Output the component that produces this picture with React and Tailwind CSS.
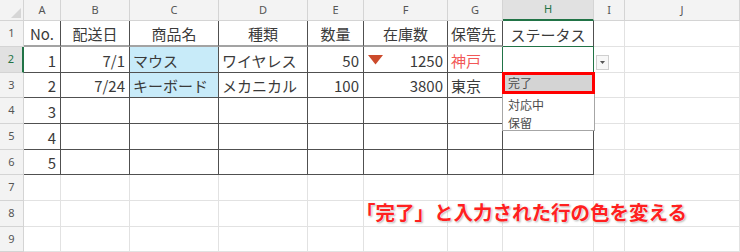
import React from "react";

const COLS = ["A", "B", "C", "D", "E", "F", "G", "H", "I", "J"];
const ROW_H = ["h-[26px]", "h-[26px]", "h-[25px]", "h-[26px]", "h-[26px]", "h-[25px]", "h-[26px]", "h-[26px]", "h-[25px]"];

const FONT = "font-['Noto_Sans_CJK_JP','Noto_Sans',sans-serif]";

function Tri() {
  return (
    <svg width="15" height="10" viewBox="0 0 15 10" className="shrink-0">
      <polygon points="0,0 15,0 7.5,9.5" fill="#cc4a2b" />
    </svg>
  );
}

// cell helpers
const GRID = "border-r border-b border-[#e2e2e2]";
const TBL = "border-r border-b border-[#505050]";
const TBL_HEAD = "border-r border-[#505050] border-b-2 border-b-[#a3a3a3]";

function cellClass(r, c) {
  // r: 1..9, c: 0..9 (A..J)
  if (r === 1 && c <= 7) {
    if (c === 7) return "border-r border-[#505050] border-b border-b-[#217346]";
    return TBL_HEAD;
  }
  if (r >= 2 && r <= 6 && c <= 7) {
    if (r === 2 && c === 6) return "border-b border-[#505050] border-r border-r-[#217346]";
    if (r === 2 && c === 7) return "border-r border-b border-[#217346]";
    return TBL;
  }
  return GRID;
}

const DATA = {
  1: [
    { t: "No.", a: "c" },
    { t: "配送日", a: "c" },
    { t: "商品名", a: "c" },
    { t: "種類", a: "c" },
    { t: "数量", a: "c" },
    { t: "在庫数", a: "c" },
    { t: "保管先", a: "l" },
    { t: "ステータス", a: "c" },
  ],
  2: [
    { t: "1", a: "r" },
    { t: "7/1", a: "r" },
    { t: "マウス", a: "l", blue: true },
    { t: "ワイヤレス", a: "l" },
    { t: "50", a: "r" },
    { t: "1250", a: "r", icon: true },
    { t: "神戸", a: "l", red: true },
    { t: "", a: "l" },
  ],
  3: [
    { t: "2", a: "r" },
    { t: "7/24", a: "r" },
    { t: "キーボード", a: "l", blue: true },
    { t: "メカニカル", a: "l" },
    { t: "100", a: "r" },
    { t: "3800", a: "r" },
    { t: "東京", a: "l" },
    { t: "", a: "l" },
  ],
  4: [{ t: "3", a: "r" }],
  5: [{ t: "4", a: "r" }],
  6: [{ t: "5", a: "r" }],
};

function Cell({ r, c }) {
  const d = (DATA[r] || [])[c];
  const base = cellClass(r, c);
  if (!d) return <div className={base} />;
  let align = "justify-start pl-[3px]";
  if (d.a === "r") align = "justify-end pr-[4px]";
  if (d.a === "c") align = "justify-center";
  if (d.icon) align = "justify-between pl-[4px] pr-[4px]";
  return (
    <div
      className={`${base} flex items-center overflow-hidden whitespace-nowrap ${align} ${
        d.blue ? "bg-[#c8ebf9]" : ""
      } ${d.red ? "text-[#f25757]" : "text-[#3a3a3a]"} text-[15px] leading-none`}
    >
      {d.icon && <Tri />}
      <span className="pt-[1px]">{d.t}</span>
    </div>
  );
}

export default function App() {
  return (
    <div className={`relative w-[740px] h-[252px] overflow-hidden bg-white ${FONT}`}>
      <div className="grid grid-cols-[24px_37px_69px_89px_89px_56px_84px_55px_91px_31px_115px] grid-rows-[21px_26px_26px_25px_26px_26px_25px_26px_26px_25px]">
        {/* corner */}
        <div className="relative bg-[#f3f3f3] border-r border-b border-[#d4d4d4]">
          <svg width="10" height="10" viewBox="0 0 10 10" className="absolute right-[2px] bottom-[2px]">
            <polygon points="10,0 10,10 0,10" fill="#d6d6d6" />
          </svg>
        </div>
        {COLS.map((l, i) =>
          l === "H" ? (
            <div
              key={l}
              className="flex items-center justify-center bg-[#e1e1e1] border-r border-[#d4d4d4] border-b-2 border-b-[#217346] text-[11px] text-[#217346] font-['Noto_Sans',sans-serif]"
            >
              {l}
            </div>
          ) : (
            <div
              key={l}
              className="flex items-center justify-center bg-[#f3f3f3] border-r border-b border-[#d4d4d4] text-[11px] text-[#555] font-['Noto_Sans',sans-serif]"
            >
              {l}
            </div>
          )
        )}
        {ROW_H.map((h, ri) => {
          const r = ri + 1;
          return (
            <React.Fragment key={r}>
              {r === 2 ? (
                <div className="flex items-center justify-center bg-[#e1e1e1] border-b border-[#d4d4d4] border-r-2 border-r-[#217346] text-[11px] text-[#217346] font-['Noto_Sans',sans-serif]">
                  {r}
                </div>
              ) : (
                <div className="flex items-center justify-center bg-[#f3f3f3] border-r border-b border-[#d4d4d4] text-[11px] text-[#555] font-['Noto_Sans',sans-serif]">
                  {r}
                </div>
              )}
              {COLS.map((_, c) => (
                <Cell key={c} r={r} c={c} />
              ))}
            </React.Fragment>
          );
        })}
      </div>

      {/* dropdown button */}
      <div className="absolute left-[596px] top-[55px] w-[13px] h-[15px] bg-[#f7f7f7] border border-[#cfcfcf] flex items-center justify-center">
        <svg width="5" height="3" viewBox="0 0 5 3">
          <polygon points="0,0 5,0 2.5,3" fill="#555" />
        </svg>
      </div>

      {/* dropdown list */}
      <div className="absolute left-[502px] top-[72px] w-[93px] h-[59px] bg-white border border-[#a6a6a6] text-[12px] leading-none text-[#4a4a4a]">
        <div className="h-[22px] -mx-px -mt-px border-[3px] border-[#ff0000] bg-[#d4d4d4] flex items-center pl-[3px]">
          完了
        </div>
        <div className="h-[19px] flex items-center pl-[5px] pt-[2px]">対応中</div>
        <div className="h-[19px] flex items-center pl-[5px]">保留</div>
      </div>

      {/* annotation */}
      <div className="absolute left-[356px] top-[202px] text-[19.5px] leading-none font-bold text-[#ff2020] whitespace-nowrap [text-shadow:0_0_2px_#fff,0_0_2px_#fff,1px_1px_2px_#9a9a9a]">
        「完了」と入力された行の色を変える
      </div>
    </div>
  );
}
